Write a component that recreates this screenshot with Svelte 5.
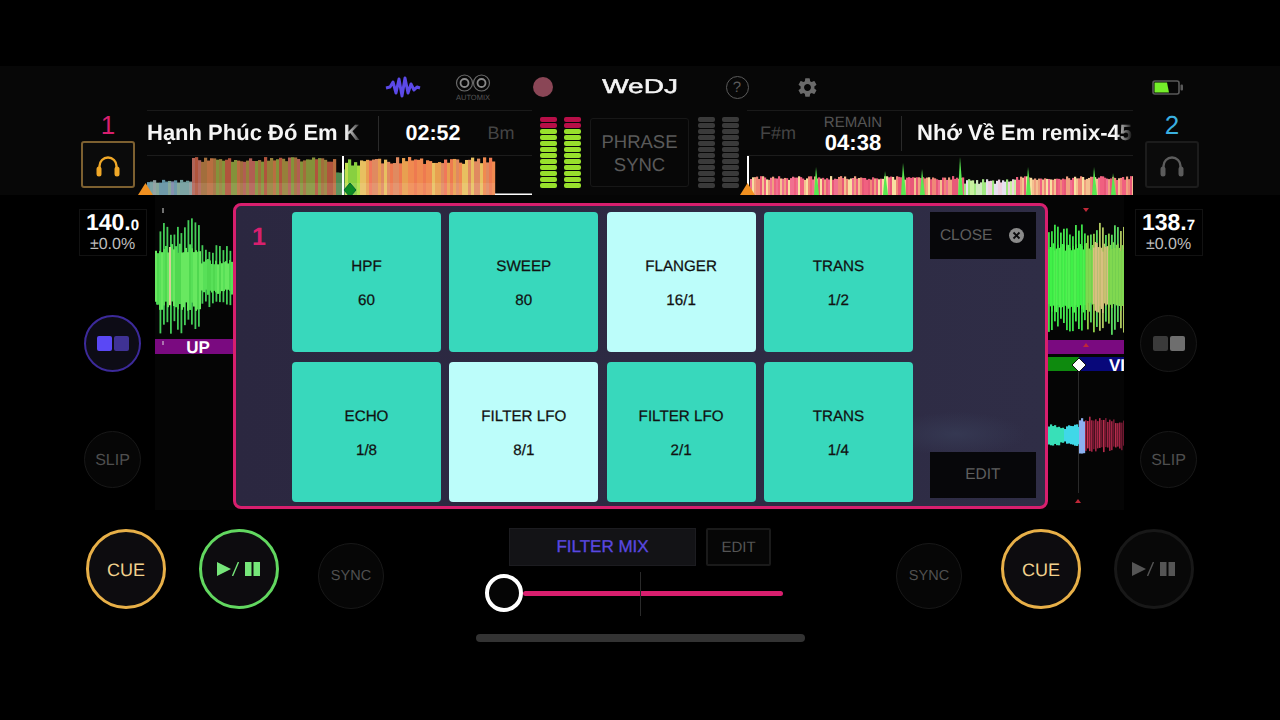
<script>
	const pads = [
		{ name: 'HPF', value: '60' },
		{ name: 'SWEEP', value: '80' },
		{ name: 'FLANGER', value: '16/1', on: true },
		{ name: 'TRANS', value: '1/2' },
		{ name: 'ECHO', value: '1/8' },
		{ name: 'FILTER LFO', value: '8/1', on: true },
		{ name: 'FILTER LFO', value: '2/1' },
		{ name: 'TRANS', value: '1/4' }
	];

	// small seeded generator so the waveforms come out the same every run
	function seeded(a) {
		return () => {
			a = (a * 1664525 + 1013904223) % 4294967296;
			return a / 4294967296;
		};
	}

	function pick(r, list) {
		return list[Math.floor(r() * list.length)];
	}

	function overviewLeft() {
		const r = seeded(11);
		const bars = [];
		for (let x = 147; x < 495; x += 3) {
			let h, color;
			if (x < 192) {
				h = 12 + r() * 4;
				color = pick(r, ['#6f9a9a', '#5f8fa0', '#7a86a8', '#7aa090', '#8a9a9a']);
			} else if (x < 335) {
				h = 33 + r() * 5;
				color = pick(r, ['#b0543c', '#a26e3c', '#96803a', '#b05e52', '#84923a', '#b06458', '#b86e40']);
			} else if (x < 344) {
				h = 20 + r() * 6;
				color = '#4f8a50';
			} else if (x < 360) {
				h = 28 + r() * 10;
				color = pick(r, ['#a8e040', '#88d040', '#c0e050']);
			} else {
				h = 31 + r() * 7;
				color = pick(r, ['#f08a50', '#e8a050', '#f0785a', '#e8c060', '#e08a60', '#ee7a50']);
			}
			bars.push({ x, h, color });
		}
		return bars;
	}

	function overviewRight() {
		const r = seeded(29);
		const bars = [];
		for (let x = 750; x < 1133; x += 2) {
			const quiet = x > 962 && x < 1015;
			const h = quiet ? 11 + r() * 5 : 15 + r() * 4;
			const color = quiet
				? pick(r, ['#e8e0f0', '#d0e8c0', '#c8f0a0', '#f0d0e0', '#a0e880'])
				: pick(r, ['#f06080', '#f08878', '#f0a080', '#f4c090', '#e85878', '#f8e0a0', '#f07090']);
			bars.push({ x, h, color });
		}
		return bars;
	}

	const spikes = [[816, 28], [885, 24], [903, 32], [922, 26], [960, 38], [1028, 28], [1094, 28], [1113, 22]];

	function detail(from, to, cy, seed, step, amp, color) {
		const r = seeded(seed);
		const bars = [];
		for (let x = from; x < to; x += step) {
			const a = amp(x);
			const up = a * (0.7 + r() * 0.3);
			const down = a * (0.7 + r() * 0.3);
			bars.push({ x, y: cy - up, h: up + down, color: color(x, r) });
		}
		return bars;
	}

	const leftOuter = detail(156, 232, 277, 5, 3.5, (x) => (x < 158 ? 30 : x < 200 ? 59 : 32), () => '#44cc58');
	const leftInner = detail(155, 232, 277, 9, 2, (x) => (x < 200 ? 34 : 18), (x, r) =>
		x > 167 && x < 171 ? '#d8d098' : pick(r, ['#58e058', '#50d850', '#68e860'])
	);
	const rightOuter = detail(1048, 1124, 277, 17, 3, () => 58, (x, r) =>
		x < 1085 ? pick(r, ['#3ce048', '#48e850']) : pick(r, ['#90d048', '#58d860', '#b0c860'])
	);
	const rightInner = detail(1048, 1124, 277, 21, 1.5, () => 36, (x, r) =>
		x < 1085 ? pick(r, ['#40f048', '#50f050']) : x > 1092 && x < 1108 ? pick(r, ['#d8c080', '#c8c070']) : '#80d850'
	);
	const cyan = detail(1048, 1079, 435, 3, 2, (x) => (x > 1058 && x < 1066 ? 8 : 11), (x) =>
		x < 1064 ? '#38e0b8' : '#40d8e8'
	);
	const pale = detail(1079, 1085, 435, 7, 2, () => 19, () => '#8cb0f0');
	const red = detail(1085, 1124, 435, 13, 2, (x) => 19 - (x - 1085) * 0.1, (x, r) => pick(r, ['#b82c4c', '#d03454', '#a02444', '#701830']));
</script>

{#snippet headphones()}
	<svg class="phones" viewBox="0 0 26 22" width="26" height="22">
		<path d="M4.5 13 V11 a8.5 8.5 0 0 1 17 0 V13" fill="none" stroke="currentColor" stroke-width="2.4" />
		<rect x="1.5" y="11.5" width="5" height="10" rx="2.5" fill="currentColor" />
		<rect x="19.5" y="11.5" width="5" height="10" rx="2.5" fill="currentColor" />
	</svg>
{/snippet}

{#snippet meter(lit)}
	<div class="meter" class:lit>
		{#each [0, 1] as col (col)}
			<div class="meter-col">
				{#each Array(12) as _, i (i)}
					<span class:red={lit && i < 2}></span>
				{/each}
			</div>
		{/each}
	</div>
{/snippet}

{#snippet playPause()}
	<svg viewBox="0 0 44 14" width="44" height="14" fill="currentColor">
		<path d="M0 0 L14 7 L0 14 Z" />
		<path d="M15.5 14 L21.5 0" stroke="currentColor" stroke-width="1.4" fill="none" />
		<rect x="28" y="0" width="6.5" height="14" />
		<rect x="36.5" y="0" width="6.5" height="14" />
	</svg>
{/snippet}

<div class="app">
	<div class="top">
		<header class="toolbar">
			<div class="tool">
				<svg viewBox="0 0 36 24" width="36" height="24">
					<polyline points="1,13 5,12 8,7 11,18 14,4 17,21 20,3 23,18 26,9 29,15 32,12 35,13" fill="none" stroke="#5b49e8" stroke-width="3" stroke-linejoin="round" />
				</svg>
			</div>
			<div class="tool automix">
				<svg viewBox="0 0 36 18" width="36" height="18" fill="none" stroke="#6a6a6a">
					<circle cx="9.5" cy="9" r="8" stroke-width="1.2" />
					<circle cx="26.5" cy="9" r="8" stroke-width="1.2" />
					<circle cx="9.5" cy="9" r="4" stroke-width="1.8" stroke="#8a8a8a" />
					<circle cx="26.5" cy="9" r="4" stroke-width="1.8" stroke="#8a8a8a" />
				</svg>
				<span>AUTOMIX</span>
			</div>
			<div class="tool"><span class="rec"></span></div>
			<div class="logo"><span>WeDJ</span></div>
			<div class="tool"><span class="help">?</span></div>
			<div class="tool">
				<svg viewBox="0 0 24 24" width="23" height="23" fill="#6a6a6a">
					<path d="M19.14 12.94c.04-.3.06-.61.06-.94 0-.32-.02-.64-.07-.94l2.03-1.58a.49.49 0 0 0 .12-.61l-1.92-3.32a.488.488 0 0 0-.59-.22l-2.39.96c-.5-.38-1.03-.7-1.62-.94l-.36-2.54a.484.484 0 0 0-.48-.41h-3.84c-.24 0-.43.17-.47.41l-.36 2.54c-.59.24-1.13.57-1.62.94l-2.39-.96c-.22-.08-.47 0-.59.22L2.74 8.87c-.12.21-.08.47.12.61l2.03 1.58c-.05.3-.09.63-.09.94s.02.64.07.94l-2.03 1.58a.49.49 0 0 0-.12.61l1.92 3.32c.12.22.37.29.59.22l2.39-.96c.5.38 1.03.7 1.62.94l.36 2.54c.05.24.24.41.48.41h3.84c.24 0 .44-.17.47-.41l.36-2.54c.59-.24 1.13-.56 1.62-.94l2.39.96c.22.08.47 0 .59-.22l1.92-3.32c.12-.22.07-.47-.12-.61l-2.01-1.58zM12 15.6c-1.98 0-3.6-1.62-3.6-3.6s1.62-3.6 3.6-3.6 3.6 1.62 3.6 3.6-1.62 3.6-3.6 3.6z" />
				</svg>
			</div>
			<svg class="battery" viewBox="0 0 32 15" width="32" height="15">
				<rect x="1" y="1" width="26" height="13" rx="2" fill="none" stroke="#5a5a5a" stroke-width="1.6" />
				<path d="M2.5 2.5 H15 L17 12.5 H2.5 Z" fill="#74ee2a" />
				<rect x="28.5" y="4.5" width="2.5" height="6" rx="1" fill="#5a5a5a" />
			</svg>
		</header>

		<div class="decks">
			<div class="deck-head">
				<span class="deck-num one">1</span>
				<button class="cue-phones on">{@render headphones()}</button>
			</div>

			<div class="track left">
				<div class="track-info">
					<div class="title fade">Hạnh Phúc Đó Em K</div>
					<div class="rule"></div>
					<div class="time">02:52</div>
					<div class="key">Bm</div>
				</div>
				<svg class="overview" viewBox="147 155 385 39" width="385" height="39">
					<g class="soft">
						{#each overviewLeft() as b}
							<rect x={b.x} y={194 - b.h} width="3.2" height={b.h} fill={b.color} />
						{/each}
						<rect x="147" y="182" width="348" height="12" fill="#fff" opacity="0.1" />
					</g>
					<rect x="495" y="192.5" width="37" height="1.5" fill="#fff" />
					<rect x="342" y="155" width="2" height="39" fill="#fff" />
					<path d="M350 182 L356 189 L350 196 L344 189 Z" fill="#0c8a22" stroke="#063" stroke-width="1" />
				</svg>
				<svg class="marker" viewBox="0 0 15 12" width="15" height="12"><path d="M7.5 0 L15 12 H0 Z" fill="#f09020" /></svg>
			</div>

			{@render meter(true)}

			<div class="phrase">PHRASE<br />SYNC</div>

			{@render meter(false)}

			<div class="track right">
				<div class="track-info">
					<div class="key wide">F#m</div>
					<div class="remain">
						<span>REMAIN</span>
						<strong>04:38</strong>
					</div>
					<div class="rule"></div>
					<div class="title fade">Nhớ Về Em remix-45</div>
				</div>
				<svg class="overview" viewBox="747 155 386 39" width="386" height="39">
					<g class="soft">
						{#each overviewRight() as b}
							<rect x={b.x} y={194 - b.h} width="2.2" height={b.h} fill={b.color} />
						{/each}
					</g>
					{#each spikes as [x, h]}
						<path d="M{x - 2} 194 L{x} {194 - h} L{x + 3} 194 Z" fill="#58e850" />
					{/each}
					<rect x="747" y="155" width="2" height="39" fill="#fff" />
				</svg>
				<svg class="marker" viewBox="0 0 15 12" width="15" height="12"><path d="M7.5 0 L15 12 H0 Z" fill="#f09020" /></svg>
			</div>

			<div class="deck-head">
				<span class="deck-num two">2</span>
				<button class="cue-phones">{@render headphones()}</button>
			</div>
		</div>
	</div>

	<main class="main">
		<div class="rail">
			<div class="bpm"><b>140.<small>0</small></b><span>±0.0%</span></div>
			<button class="round mode active"><i></i><i></i></button>
			<button class="round slip">SLIP</button>
		</div>

		<svg class="waves" viewBox="155 195 969 315" width="969" height="315">
			<g class="soft">
				{#each leftOuter as b}<rect x={b.x} y={b.y} width="1.8" height={b.h} fill={b.color} />{/each}
				{#each leftInner as b}<rect x={b.x} y={b.y} width="2" height={b.h} fill={b.color} />{/each}
			</g>
			<rect x="162.5" y="208" width="1" height="5" fill="#ddd" />
			<rect x="155" y="339" width="78" height="15" fill="#7a0a80" />
			<rect x="162.5" y="341" width="1" height="4" fill="#ddd" />
			<text x="198" y="353" class="tag">UP</text>

			<g class="soft">
				{#each rightOuter as b}<rect x={b.x} y={b.y} width="1.8" height={b.h} fill={b.color} />{/each}
				{#each rightInner as b}<rect x={b.x} y={b.y} width="1.6" height={b.h} fill={b.color} />{/each}
			</g>
			<rect x="1047" y="340" width="77" height="14" fill="#7a0a80" />
			<rect x="1047" y="357" width="32" height="14" fill="#0e8a0e" />
			<rect x="1079" y="357" width="45" height="14" fill="#08087a" />
			<text x="1117" y="371" class="tag">VI</text>
			<rect x="1078" y="371" width="1" height="122" fill="#2a2a2a" />
			<path d="M1079 358 L1086 365 L1079 372 L1072 365 Z" fill="#fff" stroke="#111" stroke-width="1" />
			<g class="soft">
				{#each cyan as b}<rect x={b.x} y={b.y} width="2.2" height={b.h} fill={b.color} />{/each}
				{#each pale as b}<rect x={b.x} y={b.y} width="2.2" height={b.h} fill={b.color} />{/each}
				{#each red as b}<rect x={b.x} y={b.y} width="1.6" height={b.h} fill={b.color} />{/each}
			</g>
			<path d="M1083 208 H1089 L1086 212 Z" fill="#c02838" />
			<path d="M1083 347 H1089 L1086 343 Z" fill="#c02838" />
			<path d="M1075 503 H1081 L1078 499 Z" fill="#c02838" />
		</svg>

		<div class="rail">
			<div class="bpm"><b>138.<small>7</small></b><span>±0.0%</span></div>
			<button class="round mode"><i></i><i></i></button>
			<button class="round slip">SLIP</button>
		</div>

		<section class="modal">
			<span class="modal-num">1</span>
			<div class="pads">
				{#each pads as pad}
					<button class="pad" class:on={pad.on}>
						<span>{pad.name}</span>
						<span>{pad.value}</span>
					</button>
				{/each}
			</div>
			<div class="side">
				<button class="side-btn close">
					CLOSE
					<svg viewBox="0 0 14 14" width="15" height="15">
						<circle cx="7" cy="7" r="7" fill="#8a8a8a" />
						<path d="M4.2 4.2 L9.8 9.8 M9.8 4.2 L4.2 9.8" stroke="#0a0a0c" stroke-width="1.8" />
					</svg>
				</button>
				<button class="side-btn">EDIT</button>
			</div>
		</section>
	</main>

	<div class="bottom">
		<div class="transport">
			<button class="round big cue">CUE</button>
			<button class="round big play">{@render playPause()}</button>
			<button class="round sync">SYNC</button>
		</div>

		<div class="mixer">
			<div class="mix-buttons">
				<button class="filter-mix">FILTER MIX</button>
				<button class="mix-edit">EDIT</button>
			</div>
			<div class="slider">
				<span class="knob"></span>
				<span class="bar"></span>
				<span class="tick"></span>
			</div>
		</div>

		<div class="transport right-side">
			<button class="round sync">SYNC</button>
			<button class="round big cue">CUE</button>
			<button class="round big idle">{@render playPause()}</button>
		</div>
	</div>

	<div class="home-bar"></div>
</div>

<style>
	:global(body) {
		background: #000;
	}

	.app {
		width: 1280px;
		height: 720px;
		padding-top: 66px;
		box-sizing: border-box;
		overflow: hidden;
		background: #000;
		color: #fff;
		font-family: 'Liberation Sans', Arial, sans-serif;
		text-rendering: geometricPrecision;
	}

	button {
		font-family: inherit;
		text-rendering: inherit;
		padding: 0;
		cursor: pointer;
	}

	.soft {
		filter: blur(0.5px);
	}

	.top {
		height: 129px;
		background: #070707;
	}

	.toolbar {
		display: flex;
		align-items: center;
		height: 42px;
		margin-bottom: 2px;
		padding-left: 368px;
	}

	.tool {
		width: 70px;
		display: flex;
		flex-direction: column;
		align-items: center;
		justify-content: center;
	}

	.automix {
		margin-top: 1px;
		gap: 1px;
	}

	.automix span {
		font-size: 7.5px;
		color: #555;
		line-height: 9px;
	}

	.rec {
		width: 20px;
		height: 20px;
		border-radius: 50%;
		background: #8a4656;
	}

	.logo {
		width: 124px;
		text-align: center;
		font-size: 20px;
		color: #f4f4f4;
		-webkit-text-stroke: 0.5px #f4f4f4;
	}

	.logo span {
		display: inline-block;
		transform: scaleX(1.4);
	}

	.help {
		width: 21px;
		height: 21px;
		border: 1px solid #5a5a5a;
		border-radius: 50%;
		color: #5a5a5a;
		font-size: 15px;
		line-height: 21px;
		text-align: center;
	}

	.battery {
		margin-left: 310px;
	}

	.decks {
		display: flex;
		height: 85px;
		padding-left: 81px;
	}

	.deck-head {
		width: 54px;
		margin-right: 12px;
		display: flex;
		flex-direction: column;
		align-items: center;
	}

	.decks .track.right + .deck-head {
		margin-left: 12px;
		margin-right: 0;
	}

	.deck-num {
		height: 31px;
		font-size: 26px;
		line-height: 31px;
	}

	.deck-num.one {
		color: #d81f6e;
	}

	.deck-num.two {
		color: #3ab0e0;
	}

	.cue-phones {
		width: 54px;
		height: 47px;
		box-sizing: border-box;
		background: #0b0b0b;
		border: 2px solid #1c1c1c;
		border-radius: 3px;
		color: #5c5c5c;
		display: flex;
		align-items: center;
		justify-content: center;
	}

	.cue-phones.on {
		background: #0b0b0b;
		border-color: #7d6030;
		color: #f0a828;
	}

	.phones {
		margin-top: 3px;
	}

	.track {
		position: relative;
		border-top: 1px solid #1a1a1a;
		height: 84px;
	}

	.track.left {
		width: 385px;
	}

	.track.right {
		width: 386px;
		margin-left: 8px;
	}

	.marker {
		position: absolute;
		bottom: 0;
		left: -7.5px;
	}

	.track.left .marker {
		left: -9px;
	}

	.track-info {
		display: flex;
		align-items: center;
		height: 44px;
		border-bottom: 1px solid #1c1c1c;
	}

	.overview {
		display: block;
	}

	.title {
		width: 216px;
		flex: none;
		white-space: nowrap;
		overflow: hidden;
		font-size: 22px;
		font-weight: 700;
		color: #f6f6f6;
	}

	.fade {
		mask-image: linear-gradient(to right, #000 92%, transparent 100%);
		-webkit-mask-image: linear-gradient(to right, #000 92%, transparent 100%);
	}

	.rule {
		width: 1px;
		height: 35px;
		background: #2a2a2a;
		margin: 0 15px;
		flex: none;
	}

	.time {
		width: 108px;
		text-align: center;
		font-size: 21.5px;
		font-weight: 700;
		margin-left: -15px;
	}

	.key {
		width: 28px;
		text-align: center;
		font-size: 18px;
		color: #444;
	}

	.key.wide {
		width: 62px;
	}

	.remain {
		width: 88px;
		display: flex;
		flex-direction: column;
		align-items: center;
		margin-right: 4px;
	}

	.remain span {
		font-size: 15px;
		line-height: 17px;
		color: #555;
	}

	.remain strong {
		font-size: 22px;
		line-height: 24px;
		margin-bottom: -2px;
	}

	.track.right .rule {
		margin-left: 0;
	}

	.meter {
		display: flex;
		gap: 7px;
		margin: 7px 0 0 8px;
		height: 71px;
	}

	.meter-col {
		display: flex;
		flex-direction: column;
		justify-content: space-between;
		width: 17px;
	}

	.meter-col span {
		height: 4.6px;
		border-radius: 2px;
		background: #3a3a3a;
	}

	.meter.lit .meter-col span {
		background: #98e02c;
	}

	.meter.lit .meter-col span.red {
		background: #b80f48;
	}

	.phrase {
		width: 99px;
		height: 69px;
		box-sizing: border-box;
		margin: 8px 0 0 9px;
		border: 1px solid #171717;
		border-radius: 3px;
		text-align: center;
		font-size: 18.5px;
		line-height: 23px;
		padding-top: 11px;
		color: #5a5a5a;
	}

	.phrase + .meter {
		margin-left: 9px;
	}

	.main {
		position: relative;
		height: 315px;
		display: flex;
		padding-left: 78px;
	}

	.rail {
		width: 69px;
		display: flex;
		flex-direction: column;
		align-items: center;
		padding-top: 14px;
		box-sizing: border-box;
	}

	.rail:last-of-type {
		margin-left: 10px;
	}

	.bpm {
		width: 68px;
		height: 47px;
		box-sizing: border-box;
		border: 1px solid #121212;
		display: flex;
		flex-direction: column;
		align-items: center;
		justify-content: center;
		line-height: 1;
		padding-bottom: 2px;
	}

	.bpm b {
		font-size: 23px;
		font-weight: 700;
		line-height: 22px;
	}

	.bpm small {
		font-size: 15px;
	}

	.bpm span {
		font-size: 16px;
		line-height: 15px;
		color: #bdbdbd;
	}

	.round {
		border-radius: 50%;
		background: #0d0c0f;
		border: 1.5px solid #181818;
		box-sizing: border-box;
		display: flex;
		align-items: center;
		justify-content: center;
		flex: none;
	}

	.mode {
		width: 57px;
		height: 57px;
		margin-top: 59px;
		gap: 2px;
		background: #070707;
	}

	.mode i {
		width: 15px;
		height: 15px;
		border-radius: 2px;
		background: #3a3a3a;
	}

	.mode i + i {
		background: #6e6e6e;
	}

	.mode.active {
		border: 2px solid #3c2a9a;
		background: #0d0c16;
	}

	.mode.active i {
		background: #5a48f5;
	}

	.mode.active i + i {
		background: #3f3294;
	}

	.slip {
		width: 57px;
		height: 57px;
		margin-top: 59px;
		padding-top: 2px;
		font-size: 16px;
		color: #4f4f4f;
		background: #060606;
	}

	.waves {
		margin-left: 8px;
		background: #050505;
		display: block;
		flex: none;
	}

	.tag {
		font-family: 'Liberation Sans', Arial, sans-serif;
		font-weight: 700;
		font-size: 17px;
		fill: #fff;
		text-anchor: middle;
	}

	.modal {
		position: absolute;
		left: 233px;
		top: 8px;
		width: 815px;
		height: 306px;
		box-sizing: border-box;
		border: 3px solid #d81f6e;
		border-radius: 8px;
		background:
			radial-gradient(ellipse 70px 22px at 89% 76%, #353852, transparent),
			linear-gradient(to right, #2b2740, #2f2d46);
		display: flex;
		padding: 6px 0 0 56px;
	}

	.modal-num {
		position: absolute;
		left: 16px;
		top: 17px;
		font-size: 25px;
		font-weight: 700;
		line-height: 28px;
		color: #d81f6e;
	}

	.pads {
		display: grid;
		grid-template-columns: repeat(4, 149px);
		grid-auto-rows: 140px;
		gap: 10px 8.3px;
	}

	.pad {
		border: none;
		border-radius: 4px;
		background: #38d8bc;
		color: #111;
		font-size: 15.2px;
		-webkit-text-stroke: 0.25px #111;
		display: flex;
		flex-direction: column;
		align-items: center;
		gap: 16px;
		line-height: 18px;
		justify-content: center;
		padding-top: 3px;
	}

	.pad.on {
		background: #bcfdfa;
	}

	.side {
		margin-left: 17px;
		width: 106px;
		display: flex;
		flex-direction: column;
		justify-content: space-between;
		height: 286px;
	}

	.side-btn {
		height: 46px;
		border: none;
		background: #07070a;
		color: #5f5f5f;
		font-size: 15.5px;
	}

	.close {
		height: 47px;
		display: flex;
		align-items: center;
		justify-content: space-between;
		padding: 0 12px 0 10px;
	}

	.bottom {
		display: flex;
		height: 124px;
		box-sizing: border-box;
		padding: 19px 0 0 86px;
	}

	.transport {
		display: flex;
		align-items: flex-end;
		height: 80px;
		gap: 33px;
	}

	.transport .sync {
		margin-left: 6px;
	}

	.right-side {
		margin-left: 113px;
	}

	.right-side .sync {
		margin-left: 0;
		margin-right: 6px;
	}

	.big {
		width: 80px;
		height: 80px;
		border-width: 3px;
	}

	.cue {
		border-color: #e8b048;
		color: #f2d28e;
		font-size: 18px;
		padding-top: 2px;
	}

	.play {
		border-color: #62d860;
		color: #76e67a;
	}

	.idle {
		border-color: #181818;
		color: #555;
		background: #080808;
	}

	.sync {
		width: 66px;
		height: 66px;
		font-size: 14.5px;
		color: #505050;
		background: #060606;
	}

	.mixer {
		width: 298px;
		margin-left: 101px;
		margin-top: -1px;
	}

	.mix-buttons {
		display: flex;
		gap: 10px;
		padding-left: 24px;
	}

	.filter-mix {
		width: 187px;
		height: 38px;
		background: #131316;
		border: 1px solid #1c1c20;
		color: #5a48e0;
		font-size: 17px;
		-webkit-text-stroke: 0.3px #5a48e0;
	}

	.mix-edit {
		width: 65px;
		height: 38px;
		background: #060606;
		border: 2px solid #1a1a1a;
		border-radius: 2px;
		color: #555;
		font-size: 15px;
	}

	.slider {
		position: relative;
		display: flex;
		align-items: center;
		height: 38px;
		margin-top: 8px;
	}

	.knob {
		width: 38px;
		height: 38px;
		box-sizing: border-box;
		border: 4px solid #fff;
		border-radius: 50%;
		background: #050505;
		flex: none;
		position: relative;
		z-index: 1;
	}

	.bar {
		width: 260px;
		height: 5px;
		border-radius: 3px;
		background: #d81f6e;
	}

	.tick {
		position: absolute;
		left: 155px;
		top: -2px;
		width: 1px;
		height: 44px;
		background: #2a2a2a;
	}

	.home-bar {
		width: 329px;
		height: 8px;
		margin-left: 476px;
		border-radius: 4px;
		background: #333;
	}
</style>
